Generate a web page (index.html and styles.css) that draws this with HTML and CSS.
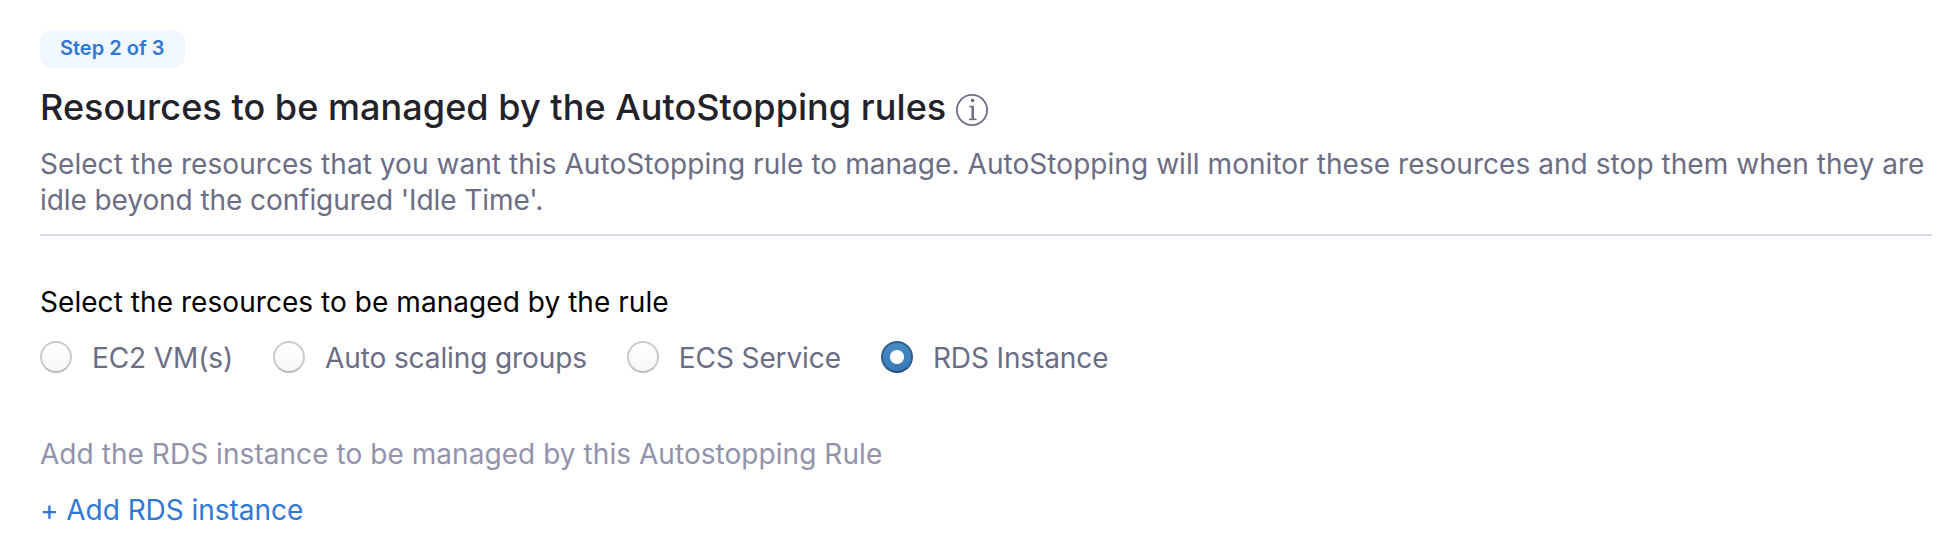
FILE: index.html
```html
<!DOCTYPE html>
<html lang="en">
<head>
<meta charset="utf-8">
<title>AutoStopping rules</title>
<link rel="stylesheet" href="styles.css">
</head>
<body>
<main class="page">
  <span class="step">Step 2 of 3</span>
  <h1 class="title">Resources to be managed by the AutoStopping rules
    <svg class="info" viewBox="0 0 32 32" width="32" height="32"><circle cx="16" cy="16" r="15.1"/><path d="M13.2 12.6H16.8V25.3" stroke-width="1.5"/><path d="M16.7 12V25.5" stroke-width="2.5"/><path d="M13 25.4H20.6" stroke-width="1.5"/><circle class="dot" cx="16.6" cy="6.5" r="1.8"/></svg>
  </h1>
  <p class="description">Select the resources that you want this AutoStopping rule to manage. AutoStopping will monitor these resources and stop them when they are idle beyond the configured 'Idle Time'.</p>
  <hr class="divider">
  <h2 class="question">Select the resources to be managed by the rule</h2>
  <div class="options">
    <label class="option"><span class="radio"></span>EC2 VM(s)</label>
    <label class="option"><span class="radio"></span>Auto scaling groups</label>
    <label class="option"><span class="radio"></span>ECS Service</label>
    <label class="option"><span class="radio checked"></span>RDS Instance</label>
  </div>
  <p class="hint">Add the RDS instance to be managed by this Autostopping Rule</p>
  <a class="add">+ Add RDS instance</a>
</main>
</body>
</html>
```

FILE: styles.css
```css
* { box-sizing: border-box; }
body { margin: 0; background: #fff; font-family: Inter, sans-serif; font-size: 28px; color: #6b6d85; }
.page { display: flex; flex-direction: column; align-items: flex-start; padding: 30px 28px 0 40px; }
.step { width: 145px; height: 38px; padding: 0 20px; border-radius: 12px; background: #f0f7ff; color: #2f78d3; font-size: 20px; font-weight: 600; line-height: 36px; white-space: nowrap; }
.title { display: flex; align-items: center; gap: 10px; margin: 16px 0 0; font-size: 36px; line-height: 46px; font-weight: 500; letter-spacing: 0.055px; color: #22222a; }
.info { margin-top: 5px; fill: none; stroke: #6b6d85; stroke-width: 1.8; }
.dot { fill: #6b6d85; stroke: none; }
.description { margin: 16px 0 0; line-height: 36px; letter-spacing: 0.057px; }
.description::first-line { letter-spacing: 0.057px; }
.description { letter-spacing: -0.08px; }
.divider { width: 100%; height: 2px; margin: 16px 0 0; border: 0; background: #d9dae6; }
.question { margin: 48px 0 0; font-size: 28px; line-height: 36px; font-weight: 400; letter-spacing: 0.055px; color: #000; }
.options { display: flex; gap: 40px; margin-top: 20px; }
.option { display: flex; align-items: center; gap: 20px; line-height: 36px; letter-spacing: -0.11px; }
.radio { width: 32px; height: 32px; margin-bottom: 2px; border-radius: 50%; border: 2px solid #c8cacd; border-bottom-color: #b9bbbf; background: linear-gradient(#fff, #f5f7f9); }
.checked { border-color: #2d5f8d; border-bottom-color: #24507a; background: radial-gradient(circle, #fff 6.5px, transparent 7.5px), linear-gradient(#478bc6, #3878b8); }
.hint { margin: 60px 0 0; line-height: 36px; letter-spacing: 0.055px; color: #9293ab; }
.add { margin-top: 20px; line-height: 36px; letter-spacing: -0.04px; color: #2f78d3; }
```
